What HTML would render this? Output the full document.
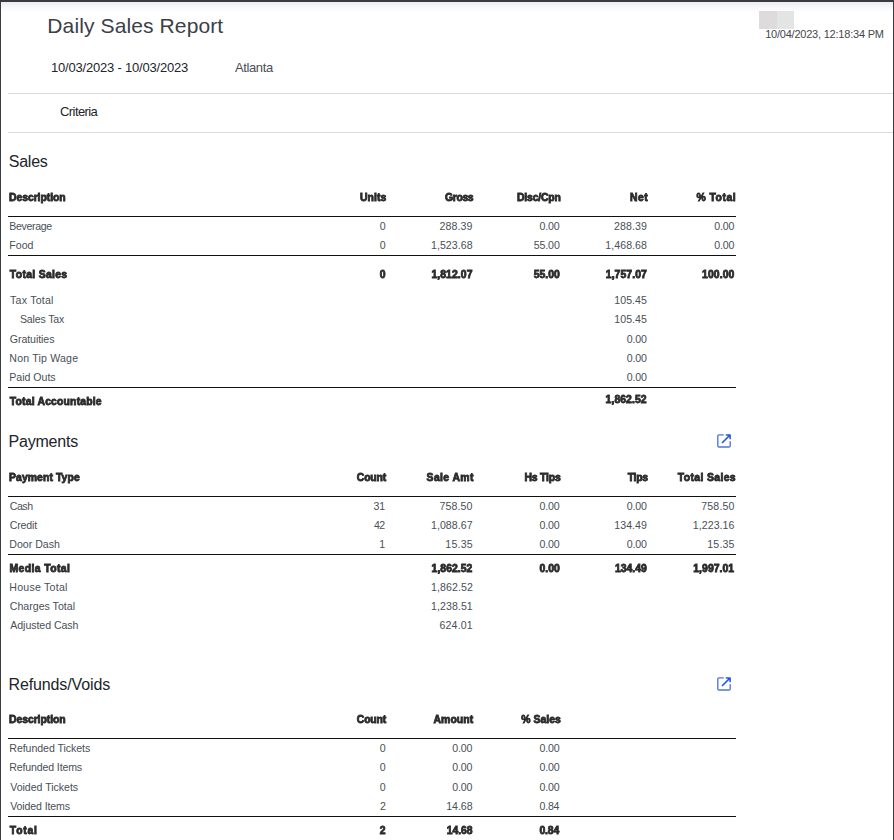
<!DOCTYPE html>
<html><head><meta charset="utf-8"><title>Daily Sales Report</title>
<style>
html,body{margin:0;padding:0;}
body{width:894px;height:840px;overflow:hidden;background:#fff;font-family:"Liberation Sans",sans-serif;position:relative;}
.frame{position:absolute;left:0;top:0;width:894px;height:840px;box-sizing:border-box;border-top:2px solid #383c40;border-left:1px solid #383c40;border-right:1px solid #383c40;}
.grad{position:absolute;left:1px;top:2px;width:892px;height:11px;background:linear-gradient(#ececec,#f4f4f4 30%,#fafafa 60%,#ffffff);}
.t{position:absolute;white-space:pre;font-family:"Liberation Sans",sans-serif;}
.b{font-weight:bold;-webkit-text-stroke:0.8px #2b2b2b;}
.bl{position:absolute;left:0;top:0;width:894px;height:840px;will-change:transform;}
.ln{position:absolute;left:8px;width:728px;height:1px;background:#111;}
.gl{position:absolute;left:8px;width:885px;height:1px;background:#dcdcdc;}
.ico{position:absolute;width:16px;height:16px;}
</style></head><body>
<div class="grad"></div>
<div class="frame"></div>
<div style="position:absolute;left:759px;top:11px;width:18px;height:18px;background:#dddbdc"></div>
<div style="position:absolute;left:777px;top:11px;width:17px;height:18px;background:#e2e5e4"></div>
<div class="gl" style="top:93px"></div>
<div class="gl" style="top:132px"></div>

<div class="ln" style="top:216px"></div>
<div class="ln" style="top:255px"></div>
<div class="ln" style="top:387px"></div>
<div class="ln" style="top:496px"></div>
<div class="ln" style="top:554px"></div>
<div class="ln" style="top:738px"></div>
<div class="ln" style="top:816px"></div>
<svg class="ico" style="left:716px;top:433px" viewBox="0 0 16 16" fill="none" stroke-width="1.35" stroke-linecap="butt" stroke-linejoin="round"><path stroke="#5075d6" d="M7.8 1.8H3A1.2 1.2 0 0 0 1.8 3v9.8a1.2 1.2 0 0 0 1.2 1.2h10a1.2 1.2 0 0 0 1.2-1.2V8.2"/><path stroke="#2259e0" stroke-width="1.55" d="M9.8 1.9h4.3v4.4M13.9 2.1L6 10"/></svg>
<svg class="ico" style="left:716px;top:675.8px" viewBox="0 0 16 16" fill="none" stroke-width="1.35" stroke-linecap="butt" stroke-linejoin="round"><path stroke="#5075d6" d="M7.8 1.8H3A1.2 1.2 0 0 0 1.8 3v9.8a1.2 1.2 0 0 0 1.2 1.2h10a1.2 1.2 0 0 0 1.2-1.2V8.2"/><path stroke="#2259e0" stroke-width="1.55" d="M9.8 1.9h4.3v4.4M13.9 2.1L6 10"/></svg>
<div class="t" style="left:47.30px;top:13px;font-size:21px;line-height:25px;color:#3a4047;letter-spacing:0.118px;">Daily Sales Report</div>
<div class="t" style="left:50.95px;top:59px;font-size:13px;line-height:17px;color:#212529;letter-spacing:-0.198px;">10/03/2023 - 10/03/2023</div>
<div class="t" style="left:234.93px;top:59px;font-size:13px;line-height:17px;color:#4a4f54;letter-spacing:-0.368px;">Atlanta</div>
<div class="t" style="left:60.08px;top:103px;font-size:13px;line-height:17px;color:#212529;letter-spacing:-0.595px;">Criteria</div>
<div class="t" style="left:765.13px;top:27px;font-size:11px;line-height:15px;color:#44484c;letter-spacing:-0.216px;">10/04/2023, 12:18:34 PM</div>
<div class="t" style="left:8.70px;top:152px;font-size:16px;line-height:20px;color:#212529;letter-spacing:-0.218px;">Sales</div>
<div class="t" style="left:8.54px;top:432px;font-size:16px;line-height:20px;color:#212529;letter-spacing:-0.215px;">Payments</div>
<div class="t" style="left:8.54px;top:675px;font-size:16px;line-height:20px;color:#212529;letter-spacing:-0.126px;">Refunds/Voids</div>
<div class="t" style="left:9.30px;top:219px;font-size:10.6px;line-height:15px;color:#495057;letter-spacing:-0.357px;">Beverage</div>
<div class="t" style="left:379.76px;top:219px;font-size:10.6px;line-height:15px;color:#495057;">0</div>
<div class="t" style="left:439.55px;top:219px;font-size:10.6px;line-height:15px;color:#495057;letter-spacing:0.109px;">288.39</div>
<div class="t" style="left:539.48px;top:219px;font-size:10.6px;line-height:15px;color:#495057;letter-spacing:-0.137px;">0.00</div>
<div class="t" style="left:613.95px;top:219px;font-size:10.6px;line-height:15px;color:#495057;letter-spacing:0.109px;">288.39</div>
<div class="t" style="left:714.18px;top:219px;font-size:10.6px;line-height:15px;color:#495057;letter-spacing:-0.137px;">0.00</div>
<div class="t" style="left:9.30px;top:238px;font-size:10.6px;line-height:15px;color:#495057;letter-spacing:-0.008px;">Food</div>
<div class="t" style="left:379.76px;top:238px;font-size:10.6px;line-height:15px;color:#495057;">0</div>
<div class="t" style="left:430.94px;top:238px;font-size:10.6px;line-height:15px;color:#495057;letter-spacing:0.054px;">1,523.68</div>
<div class="t" style="left:533.66px;top:238px;font-size:10.6px;line-height:15px;color:#495057;letter-spacing:-0.089px;">55.00</div>
<div class="t" style="left:605.34px;top:238px;font-size:10.6px;line-height:15px;color:#495057;letter-spacing:0.054px;">1,468.68</div>
<div class="t" style="left:714.18px;top:238px;font-size:10.6px;line-height:15px;color:#495057;letter-spacing:-0.137px;">0.00</div>
<div class="t" style="left:10.00px;top:293px;font-size:10.6px;line-height:15px;color:#495057;letter-spacing:0.225px;">Tax Total</div>
<div class="t" style="left:614.34px;top:293px;font-size:10.6px;line-height:15px;color:#495057;letter-spacing:0.033px;">105.45</div>
<div class="t" style="left:19.95px;top:312px;font-size:10.6px;line-height:15px;color:#495057;letter-spacing:-0.160px;">Sales Tax</div>
<div class="t" style="left:614.34px;top:312px;font-size:10.6px;line-height:15px;color:#495057;letter-spacing:0.033px;">105.45</div>
<div class="t" style="left:9.82px;top:332px;font-size:10.6px;line-height:15px;color:#495057;letter-spacing:-0.080px;">Gratuities</div>
<div class="t" style="left:626.68px;top:332px;font-size:10.6px;line-height:15px;color:#495057;letter-spacing:-0.137px;">0.00</div>
<div class="t" style="left:9.30px;top:351px;font-size:10.6px;line-height:15px;color:#495057;letter-spacing:0.182px;">Non Tip Wage</div>
<div class="t" style="left:626.68px;top:351px;font-size:10.6px;line-height:15px;color:#495057;letter-spacing:-0.137px;">0.00</div>
<div class="t" style="left:9.30px;top:370px;font-size:10.6px;line-height:15px;color:#495057;letter-spacing:-0.024px;">Paid Outs</div>
<div class="t" style="left:626.68px;top:370px;font-size:10.6px;line-height:15px;color:#495057;letter-spacing:-0.137px;">0.00</div>
<div class="t" style="left:9.83px;top:499px;font-size:10.6px;line-height:15px;color:#495057;letter-spacing:-0.510px;">Cash</div>
<div class="t" style="left:373.48px;top:499px;font-size:10.6px;line-height:15px;color:#495057;letter-spacing:-0.128px;">31</div>
<div class="t" style="left:439.42px;top:499px;font-size:10.6px;line-height:15px;color:#495057;letter-spacing:0.136px;">758.50</div>
<div class="t" style="left:539.48px;top:499px;font-size:10.6px;line-height:15px;color:#495057;letter-spacing:-0.137px;">0.00</div>
<div class="t" style="left:626.68px;top:499px;font-size:10.6px;line-height:15px;color:#495057;letter-spacing:-0.137px;">0.00</div>
<div class="t" style="left:701.32px;top:499px;font-size:10.6px;line-height:15px;color:#495057;letter-spacing:0.136px;">758.50</div>
<div class="t" style="left:9.83px;top:518px;font-size:10.6px;line-height:15px;color:#495057;letter-spacing:-0.201px;">Credit</div>
<div class="t" style="left:373.89px;top:518px;font-size:10.6px;line-height:15px;color:#495057;letter-spacing:-0.521px;">42</div>
<div class="t" style="left:430.94px;top:518px;font-size:10.6px;line-height:15px;color:#495057;letter-spacing:0.063px;">1,088.67</div>
<div class="t" style="left:539.48px;top:518px;font-size:10.6px;line-height:15px;color:#495057;letter-spacing:-0.137px;">0.00</div>
<div class="t" style="left:614.34px;top:518px;font-size:10.6px;line-height:15px;color:#495057;letter-spacing:0.033px;">134.49</div>
<div class="t" style="left:692.84px;top:518px;font-size:10.6px;line-height:15px;color:#495057;letter-spacing:0.056px;">1,223.16</div>
<div class="t" style="left:9.30px;top:537px;font-size:10.6px;line-height:15px;color:#495057;">Door Dash</div>
<div class="t" style="left:379.35px;top:537px;font-size:10.6px;line-height:15px;color:#495057;">1</div>
<div class="t" style="left:445.34px;top:537px;font-size:10.6px;line-height:15px;color:#495057;letter-spacing:0.191px;">15.35</div>
<div class="t" style="left:539.48px;top:537px;font-size:10.6px;line-height:15px;color:#495057;letter-spacing:-0.137px;">0.00</div>
<div class="t" style="left:626.68px;top:537px;font-size:10.6px;line-height:15px;color:#495057;letter-spacing:-0.137px;">0.00</div>
<div class="t" style="left:707.24px;top:537px;font-size:10.6px;line-height:15px;color:#495057;letter-spacing:0.191px;">15.35</div>
<div class="t" style="left:9.30px;top:580px;font-size:10.6px;line-height:15px;color:#495057;letter-spacing:0.235px;">House Total</div>
<div class="t" style="left:430.94px;top:580px;font-size:10.6px;line-height:15px;color:#495057;letter-spacing:0.086px;">1,862.52</div>
<div class="t" style="left:9.83px;top:599px;font-size:10.6px;line-height:15px;color:#495057;">Charges Total</div>
<div class="t" style="left:430.94px;top:599px;font-size:10.6px;line-height:15px;color:#495057;letter-spacing:0.084px;">1,238.51</div>
<div class="t" style="left:10.27px;top:618px;font-size:10.6px;line-height:15px;color:#495057;letter-spacing:-0.060px;">Adjusted Cash</div>
<div class="t" style="left:439.53px;top:618px;font-size:10.6px;line-height:15px;color:#495057;letter-spacing:0.153px;">624.01</div>
<div class="t" style="left:9.30px;top:741px;font-size:10.6px;line-height:15px;color:#495057;letter-spacing:-0.062px;">Refunded Tickets</div>
<div class="t" style="left:379.76px;top:741px;font-size:10.6px;line-height:15px;color:#495057;">0</div>
<div class="t" style="left:452.28px;top:741px;font-size:10.6px;line-height:15px;color:#495057;letter-spacing:-0.137px;">0.00</div>
<div class="t" style="left:539.48px;top:741px;font-size:10.6px;line-height:15px;color:#495057;letter-spacing:-0.137px;">0.00</div>
<div class="t" style="left:9.30px;top:760px;font-size:10.6px;line-height:15px;color:#495057;letter-spacing:-0.149px;">Refunded Items</div>
<div class="t" style="left:379.76px;top:760px;font-size:10.6px;line-height:15px;color:#495057;">0</div>
<div class="t" style="left:452.28px;top:760px;font-size:10.6px;line-height:15px;color:#495057;letter-spacing:-0.137px;">0.00</div>
<div class="t" style="left:539.48px;top:760px;font-size:10.6px;line-height:15px;color:#495057;letter-spacing:-0.137px;">0.00</div>
<div class="t" style="left:10.23px;top:780px;font-size:10.6px;line-height:15px;color:#495057;letter-spacing:-0.033px;">Voided Tickets</div>
<div class="t" style="left:379.76px;top:780px;font-size:10.6px;line-height:15px;color:#495057;">0</div>
<div class="t" style="left:452.28px;top:780px;font-size:10.6px;line-height:15px;color:#495057;letter-spacing:-0.137px;">0.00</div>
<div class="t" style="left:539.48px;top:780px;font-size:10.6px;line-height:15px;color:#495057;letter-spacing:-0.137px;">0.00</div>
<div class="t" style="left:10.23px;top:799px;font-size:10.6px;line-height:15px;color:#495057;letter-spacing:-0.130px;">Voided Items</div>
<div class="t" style="left:379.97px;top:799px;font-size:10.6px;line-height:15px;color:#495057;">2</div>
<div class="t" style="left:446.14px;top:799px;font-size:10.6px;line-height:15px;color:#495057;letter-spacing:-0.009px;">14.68</div>
<div class="t" style="left:539.58px;top:799px;font-size:10.6px;line-height:15px;color:#495057;letter-spacing:-0.228px;">0.84</div>
<div class="bl">
<div class="t b" style="left:8.99px;top:191px;font-size:10.4px;line-height:14px;color:#2b2b2b;letter-spacing:-0.049px;">Description</div>
<div class="t b" style="left:360.00px;top:191px;font-size:10.4px;line-height:14px;color:#2b2b2b;letter-spacing:0.100px;">Units</div>
<div class="t b" style="left:445.00px;top:191px;font-size:10.4px;line-height:14px;color:#2b2b2b;letter-spacing:-0.350px;">Gross</div>
<div class="t b" style="left:516.99px;top:191px;font-size:10.4px;line-height:14px;color:#2b2b2b;letter-spacing:-0.169px;">Disc/Cpn</div>
<div class="t b" style="left:629.99px;top:191px;font-size:10.4px;line-height:14px;color:#2b2b2b;letter-spacing:0.507px;">Net</div>
<div class="t b" style="left:696.40px;top:191px;font-size:10.4px;line-height:14px;color:#2b2b2b;letter-spacing:0.500px;">% Total</div>
<div class="t b" style="left:9.85px;top:268px;font-size:10.4px;line-height:14px;color:#2b2b2b;letter-spacing:0.315px;">Total Sales</div>
<div class="t b" style="left:379.82px;top:268px;font-size:10.4px;line-height:14px;color:#2b2b2b;">0</div>
<div class="t b" style="left:431.40px;top:268px;font-size:10.4px;line-height:14px;color:#2b2b2b;letter-spacing:0.081px;">1,812.07</div>
<div class="t b" style="left:533.80px;top:268px;font-size:10.4px;line-height:14px;color:#2b2b2b;">55.00</div>
<div class="t b" style="left:605.80px;top:268px;font-size:10.4px;line-height:14px;color:#2b2b2b;letter-spacing:0.081px;">1,757.07</div>
<div class="t b" style="left:702.00px;top:268px;font-size:10.4px;line-height:14px;color:#2b2b2b;letter-spacing:0.105px;">100.00</div>
<div class="t b" style="left:9.85px;top:395px;font-size:10.4px;line-height:14px;color:#2b2b2b;letter-spacing:0.178px;">Total Accountable</div>
<div class="t b" style="left:605.60px;top:393px;font-size:10.4px;line-height:14px;color:#2b2b2b;letter-spacing:0.073px;">1,862.52</div>
<div class="t b" style="left:8.99px;top:471px;font-size:10.4px;line-height:14px;color:#2b2b2b;letter-spacing:0.092px;">Payment Type</div>
<div class="t b" style="left:356.80px;top:471px;font-size:10.4px;line-height:14px;color:#2b2b2b;letter-spacing:-0.169px;">Count</div>
<div class="t b" style="left:426.60px;top:471px;font-size:10.4px;line-height:14px;color:#2b2b2b;letter-spacing:0.389px;">Sale Amt</div>
<div class="t b" style="left:524.39px;top:471px;font-size:10.4px;line-height:14px;color:#2b2b2b;letter-spacing:-0.152px;">Hs Tips</div>
<div class="t b" style="left:627.75px;top:471px;font-size:10.4px;line-height:14px;color:#2b2b2b;letter-spacing:-0.326px;">Tips</div>
<div class="t b" style="left:677.85px;top:471px;font-size:10.4px;line-height:14px;color:#2b2b2b;letter-spacing:0.365px;">Total Sales</div>
<div class="t b" style="left:9.49px;top:562px;font-size:10.4px;line-height:14px;color:#2b2b2b;letter-spacing:0.401px;">Media Total</div>
<div class="t b" style="left:431.60px;top:562px;font-size:10.4px;line-height:14px;color:#2b2b2b;letter-spacing:0.045px;">1,862.52</div>
<div class="t b" style="left:539.40px;top:562px;font-size:10.4px;line-height:14px;color:#2b2b2b;letter-spacing:0.047px;">0.00</div>
<div class="t b" style="left:615.00px;top:562px;font-size:10.4px;line-height:14px;color:#2b2b2b;">134.49</div>
<div class="t b" style="left:693.30px;top:562px;font-size:10.4px;line-height:14px;color:#2b2b2b;letter-spacing:0.045px;">1,997.01</div>
<div class="t b" style="left:8.99px;top:713px;font-size:10.4px;line-height:14px;color:#2b2b2b;letter-spacing:-0.049px;">Description</div>
<div class="t b" style="left:356.80px;top:713px;font-size:10.4px;line-height:14px;color:#2b2b2b;letter-spacing:-0.169px;">Count</div>
<div class="t b" style="left:433.50px;top:713px;font-size:10.4px;line-height:14px;color:#2b2b2b;letter-spacing:0.076px;">Amount</div>
<div class="t b" style="left:521.20px;top:713px;font-size:10.4px;line-height:14px;color:#2b2b2b;letter-spacing:0.046px;">% Sales</div>
<div class="t b" style="left:9.85px;top:824px;font-size:10.4px;line-height:14px;color:#2b2b2b;letter-spacing:0.724px;">Total</div>
<div class="t b" style="left:379.80px;top:824px;font-size:10.4px;line-height:14px;color:#2b2b2b;">2</div>
<div class="t b" style="left:446.80px;top:824px;font-size:10.4px;line-height:14px;color:#2b2b2b;letter-spacing:-0.050px;">14.68</div>
<div class="t b" style="left:539.50px;top:824px;font-size:10.4px;line-height:14px;color:#2b2b2b;letter-spacing:-0.184px;">0.84</div>
</div>
</body></html>
